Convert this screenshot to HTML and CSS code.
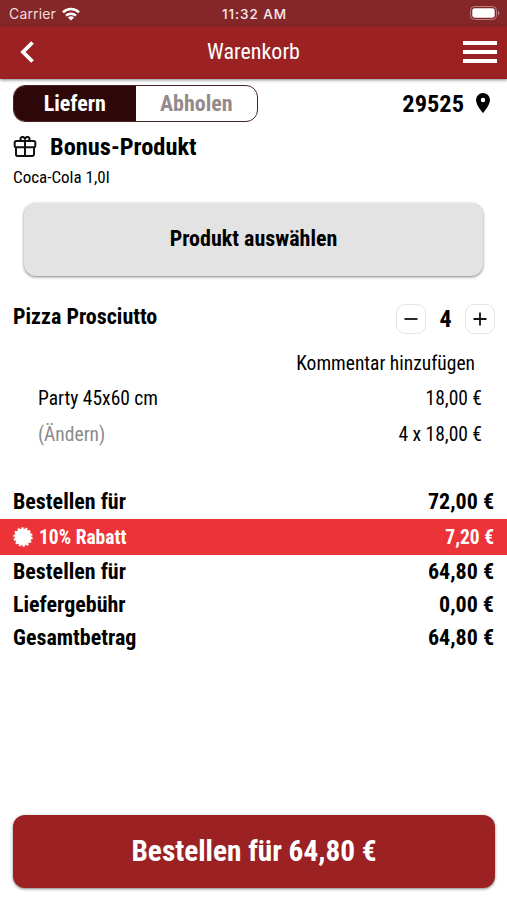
FILE: index.html
```html
<!DOCTYPE html>
<html lang="de">
<head>
    <meta charset="UTF-8">
    <meta name="viewport" content="width=device-width, initial-scale=1.0">
    <title>Warenkorb</title>
    <link rel="stylesheet" href="styles.css">
</head>
<body>
    <div class="status-bar">
        <div class="carrier">
            <span>Carrier</span>
            <svg class="wifi" viewBox="0 0 18 14" fill="none" stroke="#fff" stroke-width="2.5">
                <path d="M1 5.3a11.6 11.6 0 0 1 16 0"/>
                <path d="M4 8.7a7.2 7.2 0 0 1 10 0"/>
                <path d="M9 13.6L5.9 10.6a4.5 4.5 0 0 1 6.2 0z" fill="#fff" stroke="none"/>
            </svg>
        </div>
        <span class="clock">11:32 AM</span>
        <svg class="battery" viewBox="0 0 30 15">
            <rect x="0.5" y="0.5" width="26" height="13" rx="4" fill="none" stroke="#b98082"/>
            <rect x="2.3" y="2.3" width="22.4" height="9.4" rx="2.4" fill="#fff"/>
            <path d="M28 4.8a2.6 2.6 0 0 1 0 4.6z" fill="#b98082"/>
        </svg>
    </div>
    <header class="app-header">
        <svg class="back" viewBox="0 0 14 22" fill="none" stroke="#fff" stroke-width="3.8">
            <path d="M12.5 1.5L3 11l9.5 9.5"/>
        </svg>
        <h1>Warenkorb</h1>
        <div class="menu"><i></i><i></i><i></i></div>
    </header>

    <main>
        <div class="delivery">
            <div class="toggle">
                <span class="option active">Liefern</span>
                <span class="option">Abholen</span>
            </div>
            <div class="zip">
                <span>29525</span>
                <svg class="pin" viewBox="0 0 14 20">
                    <path d="M7 0a7 7 0 0 0-7 7c0 5.2 7 13 7 13s7-7.8 7-13a7 7 0 0 0-7-7zm0 9.2a2.2 2.2 0 1 1 0-4.4 2.2 2.2 0 0 1 0 4.4z"/>
                </svg>
            </div>
        </div>

        <div class="bonus-title">
            <svg class="gift" viewBox="0 0 24 22" fill="none" stroke="#111" stroke-width="2">
                <rect x="1.7" y="4.9" width="20.6" height="6.4" rx="1.5"/>
                <path d="M3 11.3v7a1.8 1.8 0 0 0 1.8 1.8h14.4a1.8 1.8 0 0 0 1.8-1.8v-7M12 5v15"/>
                <path d="M12 5h-3a2.1 2.1 0 1 1 2.3-3.2L12 3l0.7-1.2a2.1 2.1 0 1 1 2.3 3.200z"/>
            </svg>
            <h2>Bonus-Produkt</h2>
        </div>
        <p class="bonus-name">Coca-Cola 1,0l</p>
        <button class="select-product">Produkt auswählen</button>

        <div class="item-head">
            <h3>Pizza Prosciutto</h3>
            <div class="stepper">
                <button class="step"><svg viewBox="0 0 14 14"><path d="M0.5 7h13"/></svg></button>
                <span class="count">4</span>
                <button class="step"><svg viewBox="0 0 14 14"><path d="M0.5 7h13M7 0.5v13"/></svg></button>
            </div>
        </div>
        <div class="comment">Kommentar hinzufügen</div>
        <div class="item-row">
            <span>Party 45x60 cm</span>
            <span>18,00 €</span>
        </div>
        <div class="item-row">
            <span class="change">(Ändern)</span>
            <span>4 x 18,00 €</span>
        </div>

        <div class="totals">
            <div class="total-row first"><span>Bestellen für</span><span>72,00 €</span></div>
            <div class="total-row discount">
                <span class="discount-label">
                    <svg class="badge" viewBox="0 0 20 20">
                        <circle cx="10" cy="10" r="8.4"/>
                        <circle cx="10" cy="10" r="8.6" fill="none" stroke="#fff" stroke-width="2.2" stroke-dasharray="2.2 1.66"/>
                    </svg>
                    <span>10% Rabatt</span>
                </span>
                <span>7,20 €</span>
            </div>
            <div class="total-row"><span>Bestellen für</span><span>64,80 €</span></div>
            <div class="total-row"><span>Liefergebühr</span><span>0,00 €</span></div>
            <div class="total-row"><span>Gesamtbetrag</span><span>64,80 €</span></div>
        </div>
    </main>

    <footer>
        <button class="order">Bestellen für 64,80 €</button>
    </footer>
</body>
</html>
```
FILE: styles.css
```css
* {
    box-sizing: border-box;
}
body {
    margin: 0;
    height: 900px;
    display: flex;
    flex-direction: column;
    overflow: hidden;
    background-color: #fff;
    color: #000;
    font-family: "Roboto Condensed", Roboto, sans-serif;
    font-stretch: 75%;
    font-size: 19.5px;
    white-space: nowrap;
}
h1, h2, h3, p {
    margin: 0;
}
button {
    font-family: inherit;
    font-stretch: inherit;
    border: none;
    padding: 0;
}
svg {
    display: block;
    flex-shrink: 0;
}
.status-bar {
    height: 26px;
    display: grid;
    grid-template-columns: 1fr auto 1fr;
    align-items: center;
    padding: 1px 7px 0 9px;
    background-color: #852729;
    color: #fff;
    font-family: Inter, sans-serif;
    font-stretch: normal;
    font-size: 14px;
}
.carrier {
    display: flex;
    align-items: center;
    gap: 6px;
    color: #f0dcdc;
    letter-spacing: 0.15px;
}
.wifi {
    width: 18px;
    height: 14px;
}
.clock {
    font-size: 13.5px;
    font-weight: 500;
    letter-spacing: 0.9px;
    color: #f7eaea;
}
.battery {
    width: 30px;
    height: 15px;
    justify-self: end;
}
.app-header {
    height: 53px;
    display: grid;
    grid-template-columns: 1fr auto 1fr;
    align-items: center;
    padding: 0 10px 2px 20px;
    background-color: #9b2123;
    color: #fff;
    box-shadow: 0 1px 3px rgba(0, 0, 0, 0.5);
}
.app-header h1 {
    padding-right: 10px;
    font-size: 22px;
    font-weight: 400;
}
.back {
    width: 14px;
    height: 22px;
}
.menu {
    justify-self: end;
    display: flex;
    flex-direction: column;
    gap: 5px;
}
.menu i {
    width: 34px;
    height: 4px;
    background-color: #fff;
}
main {
    flex: 1;
}
.delivery {
    display: flex;
    justify-content: space-between;
    align-items: center;
    padding: 6px 17px 0 13px;
}
.toggle {
    display: flex;
    width: 245px;
    height: 37px;
    border: 1px solid #4a2226;
    border-radius: 12px;
    overflow: hidden;
}
.option {
    flex: 1;
    line-height: 35px;
    text-align: center;
    font-size: 22px;
    font-weight: 700;
    color: #958a8a;
}
.option.active {
    background-color: #2e0708;
    color: #fff;
}
.zip {
    display: flex;
    align-items: center;
    gap: 12px;
    padding-bottom: 1px;
    font-size: 24.4px;
    font-weight: 700;
}
.pin {
    width: 14px;
    height: 20px;
}
.bonus-title {
    height: 50px;
    display: flex;
    align-items: center;
    gap: 13px;
    padding-left: 13px;
}
.bonus-title h2 {
    padding-bottom: 2px;
    font-size: 24.4px;
}
.gift {
    width: 24px;
    height: 22px;
}
.bonus-name {
    height: 31px;
    padding-left: 13px;
    line-height: 10px;
    font-size: 17px;
}
.select-product {
    display: block;
    width: 459px;
    height: 73px;
    margin: 0 24px;
    padding-bottom: 3px;
    border-radius: 12px;
    background-color: #e3e3e3;
    box-shadow: 0 1px 3px rgba(0, 0, 0, 0.5);
    color: #000;
    font-size: 22px;
    font-weight: 700;
}
.item-head {
    display: flex;
    justify-content: space-between;
    padding: 28px 12px 0 13px;
}
.item-head h3 {
    font-size: 22px;
    line-height: 25px;
}
.stepper {
    display: flex;
    align-items: center;
}
.step {
    display: flex;
    align-items: center;
    justify-content: center;
    width: 30px;
    height: 30px;
    border: 1px solid #e4e4e4;
    border-radius: 9px;
    background-color: #fff;
}
.step svg {
    width: 14px;
    height: 14px;
    stroke: #111;
    stroke-width: 1.8;
}
.count {
    width: 39px;
    text-align: center;
    font-size: 24px;
    font-weight: 700;
}
.comment {
    padding: 12px 32px 0 0;
    line-height: 35px;
    text-align: right;
}
.item-row {
    display: flex;
    justify-content: space-between;
    padding: 0 25px 0 38px;
    line-height: 35.5px;
}
.change {
    color: #8a8a8a;
}
.totals {
    padding-top: 34px;
}
.total-row {
    display: flex;
    justify-content: space-between;
    align-items: center;
    height: 33px;
    padding: 0 13px;
    font-size: 22px;
    font-weight: 700;
}
.total-row.first {
    padding-bottom: 2px;
}
.total-row.discount {
    height: 36px;
    background-color: #ec3337;
    color: #fff;
    font-size: 19.5px;
}
.discount-label {
    display: flex;
    align-items: center;
    gap: 6px;
}
.badge {
    width: 20px;
    height: 20px;
    fill: #fff;
}
footer {
    padding: 0 12px 12px 13px;
}
.order {
    display: block;
    width: 100%;
    height: 73px;
    padding-bottom: 2px;
    border-radius: 12px;
    background-color: #9b2123;
    box-shadow: 0 1px 3px rgba(0, 0, 0, 0.5);
    color: #fff;
    font-size: 29.3px;
    font-weight: 700;
}
```
